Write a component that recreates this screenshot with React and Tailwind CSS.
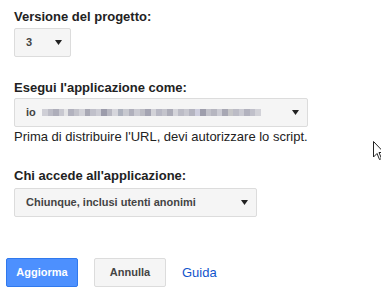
import React from 'react';

const blurBlocks = [
  'w-[6px] bg-[#cfcfd6]', 'w-[5px] bg-[#bcbcc6]', 'w-[6px] bg-[#aeaeba]', 'w-[5px] bg-[#c8c8d0]',
  'w-[4px] bg-[#e4e4e6]', 'w-[6px] bg-[#b2b2be]', 'w-[5px] bg-[#c2c2ca]', 'w-[6px] bg-[#d2d2d8]',
  'w-[5px] bg-[#a8a8b4]', 'w-[6px] bg-[#c0c0ca]', 'w-[5px] bg-[#ccccd4]', 'w-[6px] bg-[#9c9cab]',
  'w-[5px] bg-[#b8b8c2]', 'w-[6px] bg-[#d6d6dc]', 'w-[5px] bg-[#aeb2be]', 'w-[6px] bg-[#c8c9d0]',
  'w-[5px] bg-[#b0b0bc]', 'w-[6px] bg-[#cacad2]', 'w-[5px] bg-[#bcbcc4]', 'w-[6px] bg-[#a4a4b2]',
  'w-[5px] bg-[#d2d2d8]', 'w-[6px] bg-[#b8b8c4]', 'w-[5px] bg-[#c4c4cc]', 'w-[6px] bg-[#acacb8]',
  'w-[5px] bg-[#d4d4da]', 'w-[6px] bg-[#bcbcc6]', 'w-[5px] bg-[#c8c8d0]', 'w-[6px] bg-[#b4b4c0]',
  'w-[5px] bg-[#cecede]', 'w-[6px] bg-[#9e9eac]', 'w-[5px] bg-[#c2c2ca]', 'w-[6px] bg-[#b6b6c0]',
  'w-[5px] bg-[#ccccd4]', 'w-[6px] bg-[#a8a8b4]', 'w-[5px] bg-[#c6c6c8]', 'w-[6px] bg-[#bcbcc6]',
  'w-[5px] bg-[#cacad2]', 'w-[6px] bg-[#b2b2be]', 'w-[5px] bg-[#c0c0ca]', 'w-[6px] bg-[#d2d2d8]',
];

function Arrow() {
  return (
    <svg width="7" height="5" viewBox="0 0 7 5" className="shrink-0">
      <path d="M0 0 H7 L3.5 5 Z" fill="#222" />
    </svg>
  );
}

function Select({ width, children }) {
  return (
    <div
      className={`${width} h-[29px] flex items-center justify-between pl-[11px] pr-[8px] bg-[#f5f5f5] border border-[#dcdcdc] rounded-[2px] text-[11px] font-bold text-[#444]`}
    >
      <div className="flex items-center">{children}</div>
      <Arrow />
    </div>
  );
}

export default function App() {
  return (
    <div
      className="relative w-[381px] h-[297px] bg-white overflow-hidden text-[#222]"
      style={{ fontFamily: '"Liberation Sans", Arial, sans-serif' }}
    >
      <div className="pl-[14px] pt-[9px]">
        <div className="text-[13px] leading-[16px] font-bold">Versione del progetto:</div>
        <div className="mt-[3px]">
          <Select width="w-[57px]">3</Select>
        </div>

        <div className="mt-[23px] text-[13px] leading-[16px] font-bold">Esegui l'applicazione come:</div>
        <div className="mt-[2px]">
          <Select width="w-[294px]">
            <span>io</span>
            <span className="ml-[6px] flex h-[7px] blur-[0.5px]">
              {blurBlocks.map((c, i) => (
                <span key={i} className={`${c} h-[7px]`} />
              ))}
            </span>
          </Select>
        </div>
        <div className="mt-[2px] text-[13px] leading-[16px]">
          Prima di distribuire l'URL, devi autorizzare lo script.
        </div>

        <div className="mt-[23px] text-[13px] leading-[16px] font-bold">Chi accede all'applicazione:</div>
        <div className="mt-[4px]">
          <Select width="w-[243px]">Chiunque, inclusi utenti anonimi</Select>
        </div>
      </div>

      <div className="flex items-center pl-[6px] mt-[41px] gap-[16px]">
        <button className="w-[72px] h-[29px] bg-[#4d90fe] border border-[#3079ed] rounded-[2px] text-white text-[11px] font-bold">
          Aggiorma
        </button>
        <button className="w-[72px] h-[29px] bg-[#f5f5f5] border border-[#dcdcdc] rounded-[2px] text-[#444] text-[11px] font-bold">
          Annulla
        </button>
        <a className="text-[13px] text-[#15c]">Guida</a>
      </div>

      <svg className="absolute left-[373px] top-[141px]" width="12" height="20" viewBox="0 0 12 20">
        <path d="M0.5 0.5 V16 L4 12.5 L6.5 18.5 L8.5 17.5 L6 11.5 H11 Z" fill="white" stroke="#222" strokeWidth="1" />
      </svg>
    </div>
  );
}
